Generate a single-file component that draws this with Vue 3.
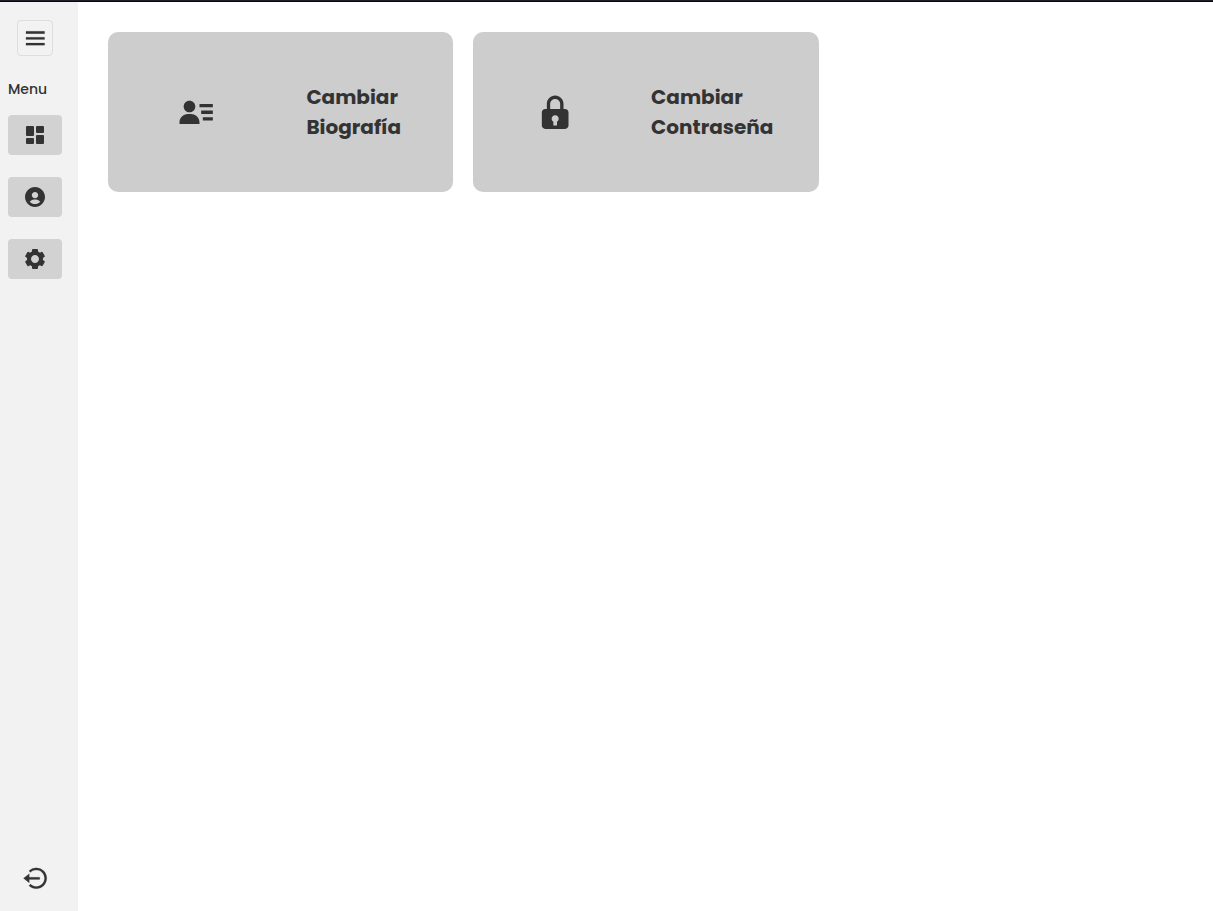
<script setup>
const nav = [
  {
    label: 'Panel',
    path: 'M4 13h6a1 1 0 0 0 1-1V4a1 1 0 0 0-1-1H4a1 1 0 0 0-1 1v8a1 1 0 0 0 1 1zm-1 7a1 1 0 0 0 1 1h6a1 1 0 0 0 1-1v-4a1 1 0 0 0-1-1H4a1 1 0 0 0-1 1v4zm10 0a1 1 0 0 0 1 1h6a1 1 0 0 0 1-1v-7a1 1 0 0 0-1-1h-6a1 1 0 0 0-1 1v7zm1-10h6a1 1 0 0 0 1-1V4a1 1 0 0 0-1-1h-6a1 1 0 0 0-1 1v5a1 1 0 0 0 1 1z',
  },
  {
    label: 'Perfil',
    path: 'M12 2C6.579 2 2 6.579 2 12s4.579 10 10 10 10-4.579 10-10S17.421 2 12 2zm0 4.9c1.84 0 3.2 1.36 3.2 3.2s-1.36 3.2-3.2 3.2-3.2-1.36-3.2-3.2 1.36-3.2 3.2-3.2zm-5.206 9.872c.897-1.32 2.493-2.3 4.206-2.3h2c1.714 0 3.309.98 4.206 2.3C15.928 18.24 14.015 19.1 12 19.1s-3.928-.86-5.206-2.328z',
  },
  {
    label: 'Ajustes',
    path: 'm2.344 15.271 2 3.46a1 1 0 0 0 1.366.365l1.396-.806c.58.457 1.221.832 1.895 1.112V21a1 1 0 0 0 1 1h4a1 1 0 0 0 1-1v-1.598a8.094 8.094 0 0 0 1.895-1.112l1.396.806c.477.275 1.091.11 1.366-.365l2-3.46a1.004 1.004 0 0 0-.365-1.366l-1.372-.793a7.683 7.683 0 0 0-.002-2.224l1.372-.793c.476-.275.641-.89.365-1.366l-2-3.46a1 1 0 0 0-1.366-.365l-1.396.806A8.034 8.034 0 0 0 15 4.598V3a1 1 0 0 0-1-1h-4a1 1 0 0 0-1 1v1.598A8.094 8.094 0 0 0 7.105 5.71L5.71 4.904a.999.999 0 0 0-1.366.365l-2 3.46a1.004 1.004 0 0 0 .365 1.366l1.372.793a7.683 7.683 0 0 0 0 2.224l-1.372.793c-.476.275-.641.89-.365 1.366zM12 8c2.206 0 4 1.794 4 4s-1.794 4-4 4-4-1.794-4-4 1.794-4 4-4z',
  },
]
</script>

<template>
  <div class="layout">
    <aside class="sidebar">
      <button class="toggle">
        <svg viewBox="0 0 24 24"><path d="M4 6h16v2H4zm0 5h16v2H4zm0 5h16v2H4z" /></svg>
      </button>
      <p class="menu-title">Menu</p>
      <nav class="nav">
        <a v-for="item in nav" :key="item.label" class="nav-item">
          <svg viewBox="0 0 24 24"><path :d="item.path" /></svg>
        </a>
      </nav>
      <a class="logout">
        <svg viewBox="0 0 24 24">
          <path d="m2 12 5 4v-3h9v-2H7V8z" />
          <path d="M13.001 2.999a8.938 8.938 0 0 0-6.364 2.637L8.051 7.05c1.322-1.322 3.08-2.051 4.95-2.051s3.628.729 4.95 2.051 2.051 3.08 2.051 4.95-.729 3.628-2.051 4.95-3.08 2.051-4.95 2.051-3.628-.729-4.95-2.051l-1.414 1.414c1.699 1.7 3.959 2.637 6.364 2.637s4.665-.937 6.364-2.637c1.7-1.699 2.637-3.959 2.637-6.364s-.937-4.665-2.637-6.364a8.938 8.938 0 0 0-6.364-2.637z" />
        </svg>
      </a>
    </aside>
    <main class="content">
      <section class="card card-bio">
        <svg viewBox="0 0 24 24">
          <path d="M8 12.052c1.995 0 3.5-1.505 3.5-3.5s-1.505-3.5-3.5-3.5-3.5 1.505-3.5 3.5 1.505 3.5 3.5 3.5zM9 13H7c-2.757 0-5 2.243-5 5v1h12v-1c0-2.757-2.243-5-5-5zM14 7h8v2h-8zM15 11h7v2h-7zM16 15h6v2h-6z" />
        </svg>
        <h2><span>Cambiar</span><span>Biografía</span></h2>
      </section>
      <section class="card card-pass">
        <svg viewBox="0 0 24 24">
          <path d="M20 12c0-1.103-.897-2-2-2h-1V7c0-2.757-2.243-5-5-5S7 4.243 7 7v3H6c-1.103 0-2 .897-2 2v8c0 1.103.897 2 2 2h12c1.103 0 2-.897 2-2v-8zM9 7c0-1.654 1.346-3 3-3s3 1.346 3 3v3H9V7zm4.1 10.723V20h-2.2v-2.277a2.12 2.12 0 1 1 2.2 0z" />
        </svg>
        <h2><span>Cambiar</span><span>Contraseña</span></h2>
      </section>
    </main>
  </div>
</template>

<style>
body {
  margin: 0;
  background: #fff;
}
</style>

<style scoped>
.layout {
  display: flex;
  box-sizing: border-box;
  height: 911px;
  padding-top: 2px;
  background: linear-gradient(#211e2b 0 1px, #08070c 1px 2px, #fff 2px);
  font-family: Poppins, Inter, "Open Sans", sans-serif;
  color: #333;
}
svg {
  display: block;
  fill: #333;
}
.sidebar {
  box-sizing: border-box;
  width: 78px;
  padding: 18px 16px 19px 8px;
  background: #f2f2f2;
  display: flex;
  flex-direction: column;
}
.toggle {
  box-sizing: border-box;
  width: 36px;
  height: 36px;
  padding: 0.8px 0 0 0.6px;
  margin-left: 9px;
  border: 1px solid #ddd;
  border-radius: 4px;
  background: transparent;
  display: grid;
  place-items: center;
}
.toggle svg,
.logout svg {
  width: 28px;
  height: 28px;
  stroke: #333;
  stroke-width: 0.12px;
}
.toggle path {
  transform: translate(0.25px, 0.25px);
}
.logout path {
  transform: translate(0.1px, 0.25px);
}
.menu-title {
  margin: 22px 0 15px;
  font-size: 14px;
  line-height: 22px;
  font-weight: 500;
}
.nav {
  display: flex;
  flex-direction: column;
  gap: 22px;
}
.nav-item {
  width: 54px;
  height: 40px;
  border-radius: 4px;
  background: #d2d2d2;
  display: grid;
  place-items: center;
}
.nav-item svg {
  width: 24px;
  height: 24px;
}
.logout {
  margin-top: auto;
  padding-left: 13px;
}
.content {
  flex: 1;
  padding: 30px;
  display: grid;
  grid-template-columns: repeat(2, 345.4px);
  grid-auto-rows: 160px;
  gap: 20px;
}
.card {
  box-sizing: border-box;
  border-radius: 10px;
  background: #cdcdcd;
  display: flex;
  align-items: center;
}
.card-bio {
  padding-left: 68.2px;
  gap: 90.2px;
}
.card-pass {
  padding-left: 61.5px;
  gap: 76.2px;
}
.card svg {
  width: 40px;
  height: 40px;
}
.card path {
  transform: translate(0.1px, 0.15px);
}
h2 {
  margin: 0;
  font-size: 20px;
  line-height: 30px;
  font-weight: 700;
}
h2 span {
  display: block;
  white-space: nowrap;
}
</style>
